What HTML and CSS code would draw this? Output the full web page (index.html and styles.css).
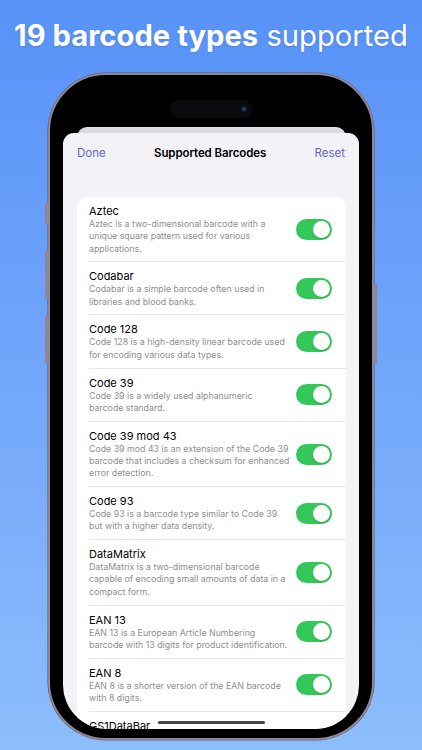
FILE: index.html
```html
<!DOCTYPE html>
<html lang="en">
<head>
<meta charset="utf-8">
<title>Supported Barcodes</title>
<link rel="stylesheet" href="styles.css">
</head>
<body>
<div class="page">
  <h1 class="headline"><b>19 barcode types</b> supported</h1>
  <div class="phone">
    <span class="btn btn-action"></span>
    <span class="btn btn-vol-up"></span>
    <span class="btn btn-vol-down"></span>
    <span class="btn btn-power"></span>
    <div class="screen">
      <div class="island"><span class="camera"></span></div>
      <div class="back-sheet"></div>
      <div class="sheet">
        <div class="nav">
          <span class="nav-btn">Done</span>
          <span class="nav-title">Supported Barcodes</span>
          <span class="nav-btn">Reset</span>
        </div>
        <div class="card">
          <div class="row"><div class="row-inner"><div class="text"><div class="title">Aztec</div><div class="desc">Aztec is a two-dimensional barcode with a<br>unique square pattern used for various<br>applications.</div></div><span class="toggle"></span></div></div>
          <div class="row"><div class="row-inner"><div class="text"><div class="title">Codabar</div><div class="desc">Codabar is a simple barcode often used in<br>libraries and blood banks.</div></div><span class="toggle"></span></div></div>
          <div class="row"><div class="row-inner"><div class="text"><div class="title">Code 128</div><div class="desc">Code 128 is a high-density linear barcode used<br>for encoding various data types.</div></div><span class="toggle"></span></div></div>
          <div class="row"><div class="row-inner"><div class="text"><div class="title">Code 39</div><div class="desc">Code 39 is a widely used alphanumeric<br>barcode standard.</div></div><span class="toggle"></span></div></div>
          <div class="row"><div class="row-inner"><div class="text"><div class="title">Code 39 mod 43</div><div class="desc">Code 39 mod 43 is an extension of the Code 39<br>barcode that includes a checksum for enhanced<br>error detection.</div></div><span class="toggle"></span></div></div>
          <div class="row"><div class="row-inner"><div class="text"><div class="title">Code 93</div><div class="desc">Code 93 is a barcode type similar to Code 39<br>but with a higher data density.</div></div><span class="toggle"></span></div></div>
          <div class="row"><div class="row-inner"><div class="text"><div class="title">DataMatrix</div><div class="desc">DataMatrix is a two-dimensional barcode<br>capable of encoding small amounts of data in a<br>compact form.</div></div><span class="toggle"></span></div></div>
          <div class="row"><div class="row-inner"><div class="text"><div class="title">EAN 13</div><div class="desc">EAN 13 is a European Article Numbering<br>barcode with 13 digits for product identification.</div></div><span class="toggle"></span></div></div>
          <div class="row"><div class="row-inner"><div class="text"><div class="title">EAN 8</div><div class="desc">EAN 8 is a shorter version of the EAN barcode<br>with 8 digits.</div></div><span class="toggle"></span></div></div>
          <div class="row"><div class="row-inner"><div class="text"><div class="title">GS1DataBar</div></div></div></div>
        </div>
      </div>
      <div class="home-indicator"></div>
    </div>
  </div>
</div>
</body>
</html>
```
FILE: styles.css
```css
* { box-sizing: border-box; }
html, body { margin: 0; padding: 0; }
body {
  width: 422px;
  height: 750px;
  overflow: hidden;
  font-family: Inter, "Noto Sans", sans-serif;
  background: linear-gradient(180deg, #5892f8 0%, #71a6fa 50%, #8cbefc 100%);
}
.page {
  width: 422px;
  height: 750px;
  padding-top: 18px;
}
.headline {
  margin: 0;
  height: 36px;
  line-height: 36px;
  font-size: 29.2px;
  font-weight: 400;
  color: #fff;
  text-align: center;
  white-space: nowrap;
  text-shadow: 0 1px 3px rgba(0, 0, 0, 0.12);
}
.headline b { font-weight: 700; }

.phone {
  position: relative;
  width: 326px;
  height: 667px;
  margin: 19px auto 0;
  border: 2px solid #8f8798;
  border-radius: 58px;
  background: #000;
  padding: 13px 13px 9px;
  box-shadow: 0 0 0 0.5px #5b5565;
}
.btn {
  position: absolute;
  width: 3px;
  background: #8f8798;
  border-radius: 1px;
}
.btn-action { left: -5px; top: 127px; height: 23px; }
.btn-vol-up { left: -5px; top: 175px; height: 48px; }
.btn-vol-down { left: -5px; top: 240px; height: 48px; }
.btn-power { right: -5px; top: 210px; height: 78px; }

.screen {
  position: relative;
  width: 100%;
  height: 100%;
  border-radius: 44px;
  overflow: hidden;
  background: #000;
}
.island {
  position: relative;
  width: 82px;
  height: 18px;
  margin: 12px auto 0;
  border-radius: 9px;
  background: #0a0a0c;
}
.camera {
  position: absolute;
  right: 5px;
  top: 6px;
  width: 6px;
  height: 6px;
  border-radius: 50%;
  background: radial-gradient(circle, #3a4a8a 0%, #141a33 60%, #0a0a0c 100%);
}
.back-sheet {
  width: 269px;
  height: 16px;
  margin: 9px auto -10px;
  border-radius: 10px 10px 0 0;
  background: #dcdce0;
}
.sheet {
  position: relative;
  height: 620px;
  border-radius: 11px 11px 0 0;
  background: #f2f2f7;
}
.nav {
  display: flex;
  align-items: center;
  justify-content: space-between;
  height: 40px;
  padding: 0 14px 0 14px;
}
.nav-btn {
  font-size: 11.5px;
  color: #6466cc;
}
.nav-title {
  font-size: 11.5px;
  font-weight: 600;
  color: #000;
  letter-spacing: -0.1px;
}
.card {
  margin: 24px 13px 0 14px;
  background: #fff;
  border-radius: 10px;
  overflow: hidden;
}
.row {
  padding-left: 12px;
}
.row-inner {
  display: flex;
  align-items: center;
  padding: 7px 14px 6.5px 0;
  border-bottom: 1px solid #e6e6eb;
}
.row:last-child .row-inner { border-bottom: none; }
.text {
  flex: 1;
  min-width: 0;
}
.title {
  font-size: 11px;
  line-height: 14px;
  color: #000;
  white-space: nowrap;
}
.desc {
  font-size: 8.8px;
  line-height: 12.3px;
  color: #8e8e93;
  white-space: nowrap;
}
.toggle {
  position: relative;
  flex: none;
  width: 36px;
  height: 21px;
  border-radius: 11px;
  background: #34c759;
}
.toggle::after {
  content: "";
  position: absolute;
  right: 2px;
  top: 2px;
  width: 17px;
  height: 17px;
  border-radius: 50%;
  background: #fff;
  box-shadow: 0 1px 2px rgba(0, 0, 0, 0.15);
}
.home-indicator {
  position: absolute;
  left: 50%;
  bottom: 5px;
  width: 107px;
  height: 3px;
  margin-left: -53px;
  border-radius: 2px;
  background: #444;
}
```
